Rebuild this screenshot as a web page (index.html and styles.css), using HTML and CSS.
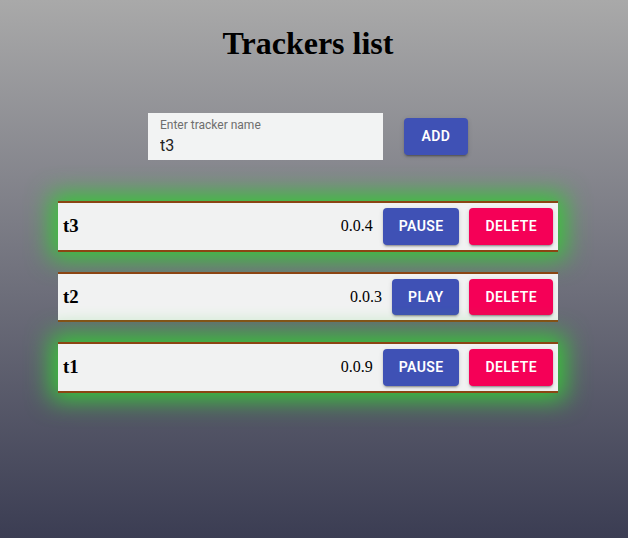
FILE: index.html
```html
<!DOCTYPE html>
<html lang="en">
<head>
<meta charset="utf-8">
<title>Trackers list</title>
<link rel="stylesheet" href="styles.css">
</head>
<body>
<div class="app">
  <h1 class="title">Trackers list</h1>
  <form class="add-form" onsubmit="return false">
    <label class="field">
      <span class="field-label">Enter tracker name</span>
      <input class="field-input" type="text" value="t3">
    </label>
    <button class="btn btn-primary" type="button">Add</button>
  </form>
  <ul class="trackers">
    <li class="tracker tracker-active">
      <h3 class="tracker-name">t3</h3>
      <span class="tracker-time">0.0.4</span>
      <button class="btn btn-primary" type="button">Pause</button>
      <button class="btn btn-secondary" type="button">Delete</button>
    </li>
    <li class="tracker">
      <h3 class="tracker-name">t2</h3>
      <span class="tracker-time">0.0.3</span>
      <button class="btn btn-primary" type="button">Play</button>
      <button class="btn btn-secondary" type="button">Delete</button>
    </li>
    <li class="tracker tracker-active">
      <h3 class="tracker-name">t1</h3>
      <span class="tracker-time">0.0.9</span>
      <button class="btn btn-primary" type="button">Pause</button>
      <button class="btn btn-secondary" type="button">Delete</button>
    </li>
  </ul>
</div>
</body>
</html>
```
FILE: styles.css
```css
html {
  height: 100%;
}
body {
  margin: 0;
  min-height: 100%;
  background: linear-gradient(to bottom, #a9a9a9, #3b3d53);
  font-family: "Liberation Serif", "Times New Roman", serif;
  color: #000;
}
.app {
  width: 600px;
  margin-left: 8px;
  padding-top: 25px;
}
.title {
  margin: 0;
  font-size: 32px;
  line-height: 37px;
  font-weight: bold;
  text-align: center;
}
.add-form {
  margin: 51px 0 0;
  display: flex;
  justify-content: center;
  align-items: center;
  gap: 21px;
}
.field {
  display: flex;
  flex-direction: column;
  width: 235px;
  height: 47px;
  box-sizing: border-box;
  padding: 5px 12px 5px;
  background: #f2f3f3;
  font-family: Roboto, "Liberation Sans", sans-serif;
}
.field-label {
  font-size: 12px;
  line-height: 14px;
  color: #6e6e6e;
  margin-bottom: 4px;
}
.field-input {
  border: none;
  background: transparent;
  outline: none;
  padding: 0;
  margin: 0;
  height: 19px;
  font-family: Roboto, "Liberation Sans", sans-serif;
  font-size: 16px;
  color: #222;
}
.btn {
  font-family: Roboto, "Liberation Sans", sans-serif;
  font-size: 14px;
  font-weight: 600;
  line-height: 24.5px;
  letter-spacing: 0.02857em;
  text-transform: uppercase;
  color: #fff;
  border: none;
  border-radius: 4px;
  padding: 6px 16px;
  min-width: 64px;
  box-sizing: border-box;
  box-shadow: 0px 3px 1px -2px rgba(0,0,0,0.2), 0px 2px 2px 0px rgba(0,0,0,0.14), 0px 1px 5px 0px rgba(0,0,0,0.12);
  cursor: pointer;
}
.btn-primary {
  background: #3f51b5;
}
.btn-secondary {
  background: #f50057;
}
.trackers {
  list-style: none;
  margin: 41px 0 0;
  padding: 0;
  display: flex;
  flex-direction: column;
  align-items: center;
  gap: 20px;
}
.tracker {
  width: 500px;
  box-sizing: border-box;
  display: flex;
  align-items: center;
  padding-left: 5px;
  background: #f1f2f2;
  border-top: 2px solid #8b4513;
  border-bottom: 2px solid #8b4513;
}
.tracker-active {
  box-shadow: 0 0 24px 7px #38c838;
}
.tracker-name {
  flex: 1;
  margin: 0;
  font-size: 18.72px;
  font-weight: bold;
}
.tracker-time {
  font-size: 16px;
  margin-right: 5px;
}
.tracker .btn {
  margin: 5px;
}
```
